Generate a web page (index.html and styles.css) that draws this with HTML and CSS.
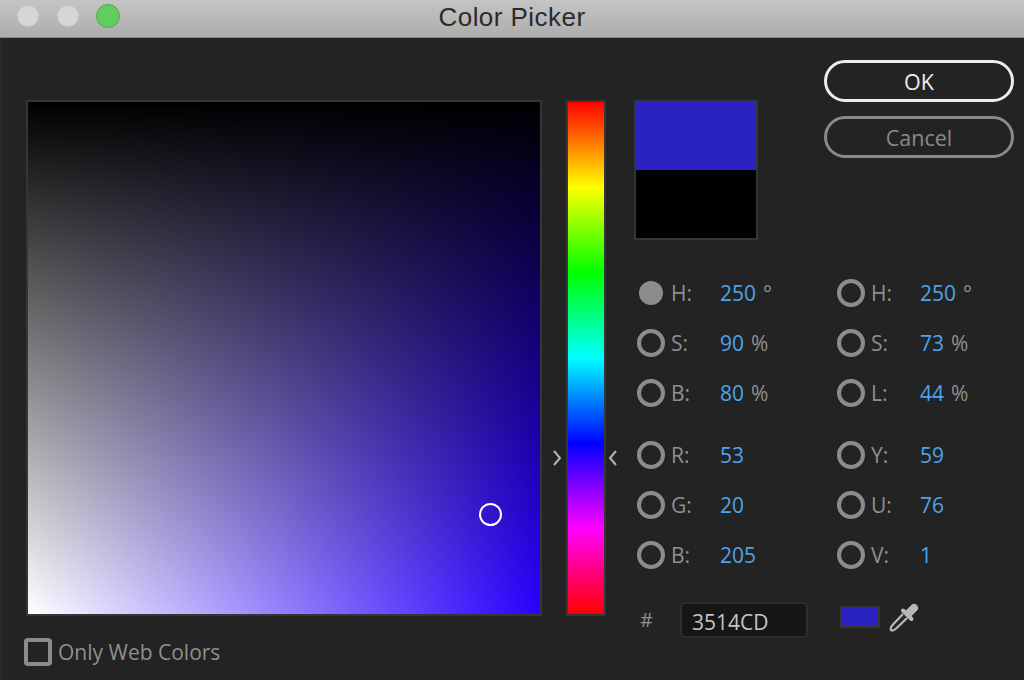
FILE: index.html
```html
<!DOCTYPE html>
<html lang="en">
<head>
<meta charset="utf-8">
<title>Color Picker</title>
<link rel="stylesheet" href="styles.css">
</head>
<body>
<div class="dialog">
  <header class="titlebar">
    <div class="lights">
      <span class="light"></span>
      <span class="light"></span>
      <span class="light light-green"></span>
    </div>
    <h1 class="title">Color Picker</h1>
  </header>
  <main class="content">
    <section class="picker">
      <div class="sv-frame">
        <div class="sv-field"><span class="sv-cursor"></span></div>
      </div>
      <label class="web-only"><span class="checkbox"></span>Only Web Colors</label>
    </section>
    <section class="hue-col">
      <div class="hue-strip"></div>
      <svg class="arrow arrow-left" viewBox="0 0 10 16" width="10" height="16"><path d="M2 1 8 8l-6 7" fill="none" stroke="#b4b4b4" stroke-width="2"/></svg>
      <svg class="arrow arrow-right" viewBox="0 0 10 16" width="10" height="16"><path d="M8 1 2 8l6 7" fill="none" stroke="#b4b4b4" stroke-width="2"/></svg>
    </section>
    <section class="values">
      <div class="swatch"><div class="swatch-new"></div><div class="swatch-old"></div></div>
      <div class="fields">
        <div class="field"><span class="radio radio-on"></span><span class="label">H:</span><span class="value">250</span><span class="unit">°</span></div>
        <div class="field"><span class="radio"></span><span class="label">H:</span><span class="value">250</span><span class="unit">°</span></div>
        <div class="field"><span class="radio"></span><span class="label">S:</span><span class="value">90</span><span class="unit">%</span></div>
        <div class="field"><span class="radio"></span><span class="label">S:</span><span class="value">73</span><span class="unit">%</span></div>
        <div class="field"><span class="radio"></span><span class="label">B:</span><span class="value">80</span><span class="unit">%</span></div>
        <div class="field"><span class="radio"></span><span class="label">L:</span><span class="value">44</span><span class="unit">%</span></div>
        <div class="field field-gap"><span class="radio"></span><span class="label">R:</span><span class="value">53</span></div>
        <div class="field field-gap"><span class="radio"></span><span class="label">Y:</span><span class="value">59</span></div>
        <div class="field"><span class="radio"></span><span class="label">G:</span><span class="value">20</span></div>
        <div class="field"><span class="radio"></span><span class="label">U:</span><span class="value">76</span></div>
        <div class="field"><span class="radio"></span><span class="label">B:</span><span class="value">205</span></div>
        <div class="field"><span class="radio"></span><span class="label">V:</span><span class="value">1</span></div>
      </div>
      <div class="hex-row">
        <span class="hash">#</span>
        <span class="hex-input">3514CD</span>
        <span class="mini-swatch"></span>
        <svg class="dropper" viewBox="0 0 32 32" width="32" height="32">
          <path d="M21 11 26 6" fill="none" stroke="#b8b8b8" stroke-width="8" stroke-linecap="round"/>
          <path d="M15 8.500 23.500 17" fill="none" stroke="#b8b8b8" stroke-width="4" stroke-linecap="round"/>
          <path d="M15 12 5 22.500c-1 1-2 3-2.300 4-.3 1.300.8 2.300 2 2 1.300-.3 3-1.500 4-2.500L19 16" fill="none" stroke="#b8b8b8" stroke-width="2.200"/>
        </svg>
      </div>
    </section>
    <section class="actions">
      <button class="btn btn-primary" type="button">OK</button>
      <button class="btn btn-secondary" type="button">Cancel</button>
    </section>
  </main>
</div>
</body>
</html>
```
FILE: styles.css
```css
* { box-sizing: border-box; }
html, body { margin: 0; padding: 0; }
body {
  width: 1024px;
  height: 680px;
  overflow: hidden;
  background: #232323;
  font-family: "Open Sans", "Noto Sans", sans-serif;
  font-size: 21px;
  color: #8f8f8f;
}
.dialog { display: flex; flex-direction: column; width: 1024px; height: 680px; }
.titlebar {
  position: relative;
  flex: none;
  height: 38px;
  display: flex;
  align-items: center;
  justify-content: center;
  padding-bottom: 3px;
  background: linear-gradient(#c4c4c4, #adadad);
  border-bottom: 1px solid #8a8a8a;
}
.lights { position: absolute; left: 17px; top: 4px; display: flex; align-items: center; gap: 18px; }
.light {
  width: 22px;
  height: 22px;
  border-radius: 50%;
  background: #d6d6d6;
  border: 1px solid #cacaca;
}
.light-green { width: 24px; height: 24px; margin-left: -1px; background: #62cc5e; border-color: #4fae49; }
.title {
  margin: 0;
  font-family: "Liberation Sans", Arial, sans-serif;
  font-weight: 400;
  font-size: 26px;
  letter-spacing: 0.45px;
  color: #2b2b2b;
}
.content { flex: 1; display: flex; padding: 62px 0 0 24px; border-left: 2px solid #2a2a2a; }
.picker { flex: none; width: 516px; }
.sv-frame { border: 2px solid #353535; width: 516px; height: 516px; }
.sv-field {
  position: relative;
  width: 512px;
  height: 512px;
  background: linear-gradient(to top, rgba(0,0,0,0), #000), linear-gradient(to right, #fff, #2a00ff);
}
.sv-cursor {
  position: absolute;
  left: 451px;
  top: 401px;
  width: 23px;
  height: 23px;
  border: 2px solid #fff;
  border-radius: 50%;
}
.web-only { display: flex; align-items: center; gap: 6px; margin: 20px 0 0 -2px; height: 32px; color: #8f8f8f; }
.checkbox { width: 28px; height: 28px; border: 4px solid #8c8c8c; border-radius: 4px; }
.hue-col { position: relative; flex: none; width: 40px; margin-left: 24px; }
.hue-strip {
  width: 40px;
  height: 516px;
  border: 2px solid #353535;
  background: linear-gradient(to bottom, #f00, #ff0 16.67%, #0f0 33.33%, #0ff 50%, #00f 66.67%, #f0f 83.33%, #f00) padding-box;
}
.arrow { position: absolute; top: 350px; }
.arrow-left { left: -14px; }
.arrow-right { right: -12px; }
.values { flex: none; width: 380px; margin-left: 28px; }
.swatch { width: 124px; height: 140px; border: 2px solid #353535; }
.swatch-new { height: 68px; background: #2a23c2; }
.swatch-old { height: 68px; background: #000; }
.fields {
  display: grid;
  grid-template-columns: 200px 180px;
  grid-template-rows: 50px 50px 50px 62px 50px 50px;
  margin-top: 28px;
}
.field { display: flex; align-items: center; line-height: 50px; }
.field-gap { margin-top: 12px; }
.radio {
  flex: none;
  width: 28px;
  height: 28px;
  margin-left: 3px;
  border: 4px solid #8c8c8c;
  border-radius: 50%;
}
.radio-on { width: 24px; height: 24px; margin: 0 2px 0 5px; background: #8c8c8c; border: 0; }
.label { flex: none; width: 55px; padding-left: 6px; }
.value { color: #4da3e8; }
.unit { margin-left: 7px; }
.hex-row { display: flex; align-items: flex-start; margin-top: 22px; height: 36px; }
.hash { width: 46px; padding: 4px 0 0 6px; font-size: 20px; }
.hex-input {
  width: 128px;
  height: 36px;
  padding-left: 10px;
  line-height: 36px;
  background: #161616;
  border: 2px solid #2e2e2e;
  border-radius: 5px;
  color: #c4c4c4;
}
.mini-swatch {
  width: 40px;
  height: 22px;
  margin: 4px 0 0 32px;
  background: #2a23c2;
  border: 2px solid #353535;
}
.dropper { margin-left: 8px; }
.actions { position: absolute; left: 824px; top: 60px; display: flex; flex-direction: column; gap: 14px; }
.btn {
  width: 190px;
  height: 42px;
  padding: 0;
  background: transparent;
  border-radius: 21px;
  font: 400 21.5px "Open Sans", sans-serif;
}
.btn-primary { border: 3px solid #ededed; color: #ededed; }
.btn-secondary { border: 3px solid #8a8a8a; color: #8a8a8a; }
```
